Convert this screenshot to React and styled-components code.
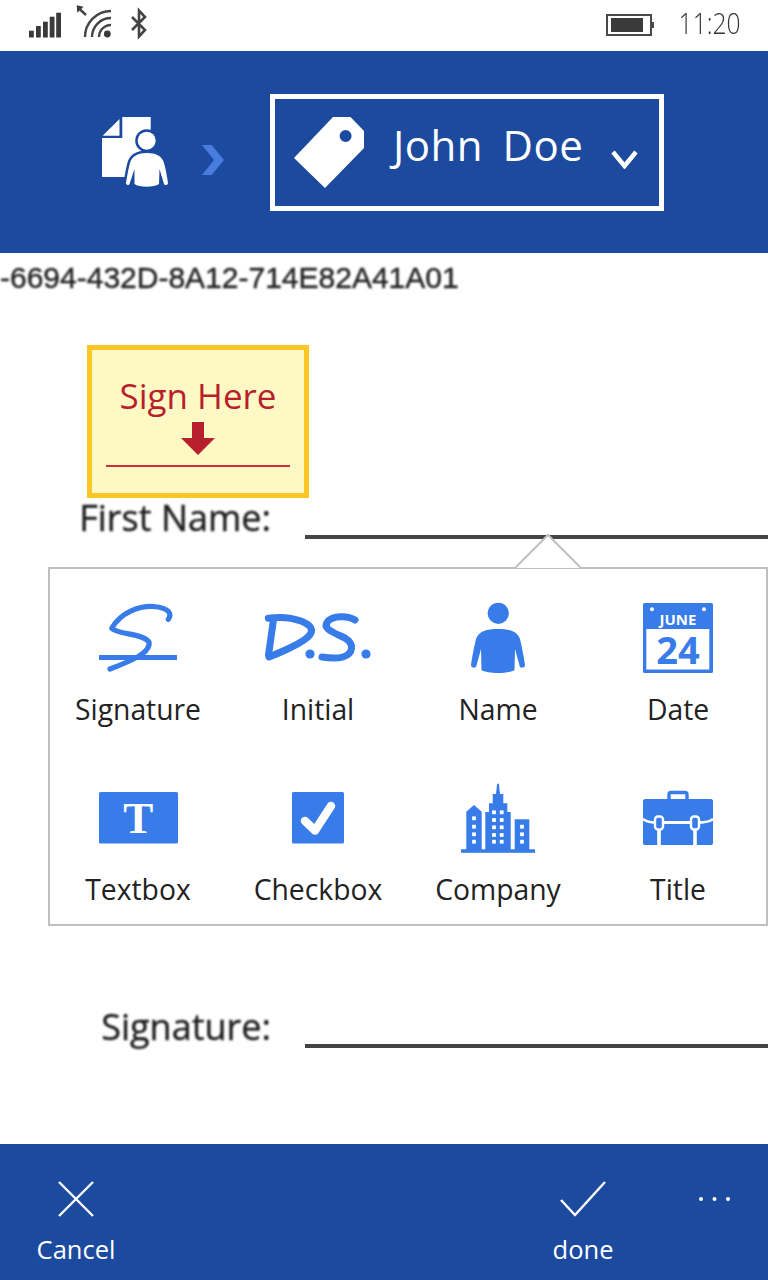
import React from "react";
import styled, { createGlobalStyle } from "styled-components";

const BLUE = "#1c4a9f";
const ICON = "#377ce8";
const UI_FONT = `"Open Sans", "Noto Sans", sans-serif`;

const GlobalStyle = createGlobalStyle`
  html, body { margin: 0; padding: 0; background: #fff; }
  * { box-sizing: border-box; }
`;

const Page = styled.div`
  width: 768px;
  height: 1280px;
  display: flex;
  flex-direction: column;
  overflow: hidden;
  background: #fff;
  font-family: ${UI_FONT};
`;

const StatusBar = styled.div`
  height: 51px;
  flex: none;
  display: flex;
  justify-content: space-between;
  align-items: flex-start;
  padding: 0 27px 0 28px;
`;

const StatusRight = styled.div`
  display: flex;
  align-items: center;
  height: 50px;
  gap: 11px;
`;

const Clock = styled.span`
  display: inline-block;
  font-size: 30px;
  font-weight: 300;
  line-height: 44px;
  margin-bottom: 4px;
  color: #333;
  transform: scaleX(0.82);
  transform-origin: right center;
`;

const Glyph = styled.svg`
  display: block;
  flex: none;
`;

const Header = styled.header`
  height: 202px;
  flex: none;
  background: ${BLUE};
  display: flex;
  align-items: center;
  padding-left: 100px;
`;

const Crumb = styled.svg`
  display: block;
  flex: none;
  margin-left: ${(p) => p.$left || 0}px;
  margin-top: ${(p) => p.$top || 0}px;
`;

const Select = styled.div`
  width: 394px;
  height: 117px;
  margin-left: 45px;
  border: 5px solid #fff;
  display: flex;
  align-items: center;
  padding-left: 19px;
  color: #fff;
`;

const SelectName = styled.span`
  margin-left: 29px;
  font-size: 42px;
  line-height: 50px;
  letter-spacing: 0.5px;
  word-spacing: 8px;
  margin-top: -14px;
  white-space: nowrap;
`;

const Doc = styled.main`
  flex: 1;
  display: flex;
  flex-direction: column;
  min-height: 0;
`;

const Guid = styled.div`
  height: 50px;
  font-family: "Liberation Sans", sans-serif;
  font-size: 30px;
  line-height: 50px;
  color: #222;
  -webkit-text-stroke: 0.4px #222;
  white-space: nowrap;
  filter: blur(0.8px);
`;

const SignHere = styled.div`
  width: 222px;
  height: 153px;
  margin: 42px 0 0 87px;
  border: 5px solid #fcc624;
  background: #fdf8c4;
  display: flex;
  flex-direction: column;
  align-items: center;
  color: #b81f2d;
`;

const SignLabel = styled.div`
  font-size: 35px;
  line-height: 46px;
  margin-top: 23px;
`;

const SignArrow = styled.svg`
  display: block;
  flex: none;
  margin-top: 3px;
`;

const SignRule = styled.div`
  width: 184px;
  height: 2px;
  margin-top: 10px;
  background: #c8303a;
`;

const FieldRow = styled.div`
  height: 40px;
  flex: none;
  display: flex;
  margin-top: ${(p) => p.$top}px;
  position: relative;
`;

const FieldLabel = styled.div`
  width: 271px;
  text-align: right;
  font-size: 36px;
  font-weight: 500;
  line-height: 40px;
  color: #1c1c1c;
  -webkit-text-stroke: 0.4px #1c1c1c;
  filter: blur(1px);
  white-space: nowrap;
`;

const FieldLine = styled.div`
  flex: 1;
  height: 3.5px;
  margin: ${(p) => p.$top}px 0 0 34px;
  background: #444;
  filter: blur(0.6px);
`;

const Popover = styled.section`
  position: relative;
  flex: none;
  width: 720px;
  height: 359px;
  margin: 29px 0 0 48px;
  background: #fff;
  border: 2px solid #c0c0c0;
  padding: 34px 0 15px;
`;

const Pointer = styled.svg`
  position: absolute;
  left: 464px;
  top: -36px;
  display: block;
`;

const Grid = styled.div`
  display: grid;
  grid-template-columns: repeat(4, 180px);
  row-gap: 54px;
  margin-left: -2px;
`;

const Tool = styled.div`
  display: flex;
  flex-direction: column;
  align-items: center;
`;

const ToolIcon = styled.svg`
  display: block;
  width: 110px;
  height: 70px;
  overflow: visible;
`;

const ToolLabel = styled.div`
  margin-top: 16px;
  font-size: 28.3px;
  line-height: 40px;
  color: #222;
  white-space: nowrap;
`;

const Footer = styled.footer`
  height: 136px;
  flex: none;
  background: ${BLUE};
  display: flex;
  color: #fff;
`;

const Action = styled.div`
  width: 152px;
  margin-left: ${(p) => p.$left || 0}px;
  display: flex;
  flex-direction: column;
  align-items: center;
  padding-top: 37px;
`;

const ActionLabel = styled.div`
  font-size: 25.5px;
  line-height: 36px;
  margin-top: 14px;
`;

const More = styled.svg`
  display: block;
  margin: 52px 0 0 39px;
`;

const SignatureIcon = () => (
  <ToolIcon viewBox="0 0 110 70">
    <path d="M85.3 16.3C89 11 87 5 70.3 3.5C56 3 38 9 28.7 25.3C36 32 60 30 66 39C68 50 48 58 27 66" fill="none" stroke={ICON} strokeWidth="5.2" strokeLinecap="round" strokeLinejoin="round" />
    <rect x="16" y="52" width="78" height="5" fill={ICON} />
  </ToolIcon>
);

const InitialIcon = () => (
  <ToolIcon viewBox="0 0 110 70">
    <path d="M5.3 15.3C14 14 27 14 38 18C46 21 50 25 48 30C45 37 26 46 6 54M10.3 18L5.5 52" fill="none" stroke={ICON} strokeWidth="7" strokeLinecap="round" strokeLinejoin="round" />
    <circle cx="47" cy="51" r="4.6" fill={ICON} />
    <path d="M92 17C84 12 70 13 65 18C58 26 72 30 82 35C92 41 90 51 80 54C73 56 65 55 59 54" fill="none" stroke={ICON} strokeWidth="7" strokeLinecap="round" strokeLinejoin="round" />
    <circle cx="103" cy="51" r="4.6" fill={ICON} />
  </ToolIcon>
);

const NameIcon = () => (
  <ToolIcon viewBox="0 0 110 70">
    <circle cx="55.3" cy="10.3" r="10.6" fill={ICON} />
    <path d="M55 26C66 26 74 28 77 36C79 44 81 55 82 62C82 65 77 66 76.5 62.5L72 46L71.5 67C66 71 44 71 38.5 67L38 46L33.5 62.5C33 66 28 65 28 62C29 55 31 44 33 36C36 28 44 26 55 26Z" fill={ICON} />
  </ToolIcon>
);

const DateIcon = () => (
  <ToolIcon viewBox="0 0 110 70">
    <rect x="20" y="0" width="70" height="70" rx="1.5" fill={ICON} />
    <rect x="23.3" y="26" width="63" height="40.5" fill="#fff" />
    <circle cx="29" cy="6.3" r="2" fill="#fff" />
    <circle cx="81" cy="6.3" r="2" fill="#fff" />
    <text x="55" y="22" textAnchor="middle" fontFamily="'Open Sans', sans-serif" fontWeight="700" fontSize="15" fill="#fff">JUNE</text>
    <text x="55" y="61" textAnchor="middle" fontFamily="'Open Sans', sans-serif" fontWeight="700" fontSize="38" fill={ICON}>24</text>
  </ToolIcon>
);

const TextboxIcon = () => (
  <ToolIcon viewBox="0 0 110 70">
    <rect x="16" y="9" width="79" height="51.5" rx="1.5" fill={ICON} />
    <text x="55.3" y="50.3" textAnchor="middle" fontFamily="'Liberation Serif', serif" fontWeight="700" fontSize="45" fill="#fff">T</text>
  </ToolIcon>
);

const CheckboxIcon = () => (
  <ToolIcon viewBox="0 0 110 70">
    <rect x="29" y="9" width="52" height="51.5" rx="1.5" fill={ICON} />
    <path d="M42 38L52 47.5L68 23" fill="none" stroke="#fff" strokeWidth="8.5" strokeLinecap="round" strokeLinejoin="round" />
  </ToolIcon>
);

const windows = [
  [31, 35.3], [31, 43.7], [31, 51.3], [31, 58.7],
  [51, 29.3], [51, 37], [51, 44.3], [51, 52], [51, 58.7],
  [58.7, 29.3], [58.7, 37], [58.7, 44.3], [58.7, 52], [58.7, 58.7],
  [79, 43.7], [79, 51.3], [79, 58.7],
];

const CompanyIcon = () => (
  <ToolIcon viewBox="0 0 110 70">
    <rect x="18" y="66.3" width="74" height="3.5" fill={ICON} />
    <path d="M23.3 67V28.7L31 22L38.7 28.7V67Z" fill={ICON} />
    <path d="M42.3 67V29H46V20.3H49.7V11H53L54 1.5C54.3 0 55.7 0 56 1.5L57 11H60.3V20.3H64.3V29H67.7V67Z" fill={ICON} />
    <rect x="71.7" y="36.3" width="14.6" height="31" fill={ICON} />
    {windows.map(([x, y]) => (
      <rect key={`${x}-${y}`} x={x - 1.9} y={y - 1.9} width="3.8" height="3.8" fill="#fff" />
    ))}
  </ToolIcon>
);

const TitleIcon = () => (
  <ToolIcon viewBox="0 0 110 70">
    <path d="M46 17V11.5C46 10 47 9.5 48 9.5H62C63 9.5 64 10 64 11.5V17" fill="none" stroke={ICON} strokeWidth="3.4" />
    <path d="M22 16H88C89 16 90 17 90 18V60C90 61.5 89 62 88 62H22C21 62 20 61.5 20 60V18C20 17 21 16 22 16Z" fill={ICON} />
    <path d="M20 36C24 39 28 39.5 32 39.5M40 39.5H68M76 39.5C81 39.5 86 39 90 36" fill="none" stroke="#fff" strokeWidth="2.8" />
    <path d="M36 46V62M72 46V62" fill="none" stroke="#fff" strokeWidth="3.6" />
    <rect x="32" y="33.5" width="8" height="13" rx="3" fill={ICON} stroke="#fff" strokeWidth="2.4" />
    <rect x="68" y="33.5" width="8" height="13" rx="3" fill={ICON} stroke="#fff" strokeWidth="2.4" />
  </ToolIcon>
);

const tools = [
  { label: "Signature", Icon: SignatureIcon },
  { label: "Initial", Icon: InitialIcon },
  { label: "Name", Icon: NameIcon },
  { label: "Date", Icon: DateIcon },
  { label: "Textbox", Icon: TextboxIcon },
  { label: "Checkbox", Icon: CheckboxIcon },
  { label: "Company", Icon: CompanyIcon },
  { label: "Title", Icon: TitleIcon },
];

const App = () => {
  return (
    <Page>
      <GlobalStyle />
      <StatusBar>
        <Glyph width="125" height="42" viewBox="28 0 125 42">
          <g fill="#3a3a3a">
            <rect x="29" y="30.7" width="4.8" height="6.8" />
            <rect x="36" y="26" width="4.8" height="11.5" />
            <rect x="43" y="21.7" width="4.8" height="15.8" />
            <rect x="49.7" y="16.7" width="4.8" height="20.8" />
            <rect x="56.2" y="12.7" width="4.8" height="24.8" />
            <circle cx="107.3" cy="34" r="3.4" />
            <path d="M76.7 5.3L83.5 6.7L77.3 12.7Z" />
          </g>
          <g fill="none" stroke="#444" strokeWidth="2.4">
            <path d="M79 8.5L86 15" />
            <path d="M85 37A26 26 0 0 1 111 11" />
            <path d="M92 37A19 19 0 0 1 111 18" />
            <path d="M99 37A12 12 0 0 1 111 25" />
            <path d="M132 17L145 30L139 36.5V10.5L145 17L132 30" strokeWidth="2.6" />
          </g>
        </Glyph>
        <StatusRight>
          <Glyph width="48" height="22" viewBox="0 0 48 22">
            <rect x="1" y="1" width="44" height="20" fill="none" stroke="#4a4a4a" strokeWidth="2" />
            <rect x="5" y="4" width="32" height="14" fill="#3a3a3a" />
            <rect x="46" y="8" width="2" height="6" fill="#4a4a4a" />
          </Glyph>
          <Clock>11:20</Clock>
        </StatusRight>
      </StatusBar>

      <Header>
        <Crumb width="70" height="74" viewBox="100 116 70 74">
          <path d="M122.3 118H150.7V178H102V139H122.3Z" fill="#fff" />
          <path d="M119.5 120V136.7H102.7Z" fill="#fff" />
          <circle cx="146.7" cy="141.7" r="9" fill="#fff" stroke={BLUE} strokeWidth="5" paintOrder="stroke" />
          <path d="M147 154C156 154 162 157 164 164C166 171 167 178 168 184C168 186 165 187 164 185L159.5 170L159 185C154 188.5 139 188.5 134.5 185L134.5 170L129.5 185C129 187 126 186 126 184C127 178 128 171 130 164C132 157 138 154 147 154Z" fill="#fff" stroke={BLUE} strokeWidth="5" paintOrder="stroke" />
        </Crumb>
        <Crumb width="23" height="30" viewBox="0 0 23 30" $left={32} $top={15}>
          <path d="M0 0H9.7L22 15L9.7 30H0L12 15Z" fill="#4a7ce0" />
        </Crumb>
        <Select>
          <Glyph width="70" height="71" viewBox="294 117 70 71">
            <path fillRule="evenodd" d="M333 117H350.5L364 131V148L325 188L294 158ZM345.6 130A6 6 0 1 0 345.6 142A6 6 0 1 0 345.6 130Z" fill="#fff" />
          </Glyph>
          <SelectName>John Doe</SelectName>
          <Crumb width="27" height="19" viewBox="0 0 27 19" $left={28} $top={15}>
            <path d="M2 2L13.5 16L25 2" fill="none" stroke="#fff" strokeWidth="4.5" />
          </Crumb>
        </Select>
      </Header>

      <Doc>
        <Guid>-6694-432D-8A12-714E82A41A01</Guid>
        <SignHere>
          <SignLabel>Sign Here</SignLabel>
          <SignArrow width="34" height="33" viewBox="0 0 34 33">
            <path d="M11 0H23V16H34L17 33L0 16H11Z" fill="#b81f2d" />
          </SignArrow>
          <SignRule />
        </SignHere>
        <FieldRow $top={0}>
          <FieldLabel>First Name:</FieldLabel>
          <FieldLine $top={37} />
        </FieldRow>
        <Popover>
          <Pointer width="68" height="36" viewBox="0 0 68 36">
            <path d="M1 35L34 2L67 35" fill="#fff" stroke="#c0c0c0" strokeWidth="2" />
          </Pointer>
          <Grid>
            {tools.map(({ label, Icon }) => (
              <Tool key={label}>
                <Icon />
                <ToolLabel>{label}</ToolLabel>
              </Tool>
            ))}
          </Grid>
        </Popover>
        <FieldRow $top={81}>
          <FieldLabel>Signature:</FieldLabel>
          <FieldLine $top={37} />
        </FieldRow>
      </Doc>

      <Footer>
        <Action>
          <Glyph width="36" height="36" viewBox="0 0 36 36">
            <path d="M1 1L35 35M35 1L1 35" stroke="#fff" strokeWidth="2.4" fill="none" />
          </Glyph>
          <ActionLabel>Cancel</ActionLabel>
        </Action>
        <Action $left={355}>
          <Glyph width="46" height="36" viewBox="0 0 46 36">
            <path d="M1 19L15 34L45 1" stroke="#fff" strokeWidth="2.4" fill="none" />
          </Glyph>
          <ActionLabel>done</ActionLabel>
        </Action>
        <More width="33" height="6" viewBox="0 0 33 6">
          <circle cx="3" cy="3" r="2" fill="#fff" />
          <circle cx="16.5" cy="3" r="2" fill="#fff" />
          <circle cx="30" cy="3" r="2" fill="#fff" />
        </More>
      </Footer>
    </Page>
  );
};

export default App;
